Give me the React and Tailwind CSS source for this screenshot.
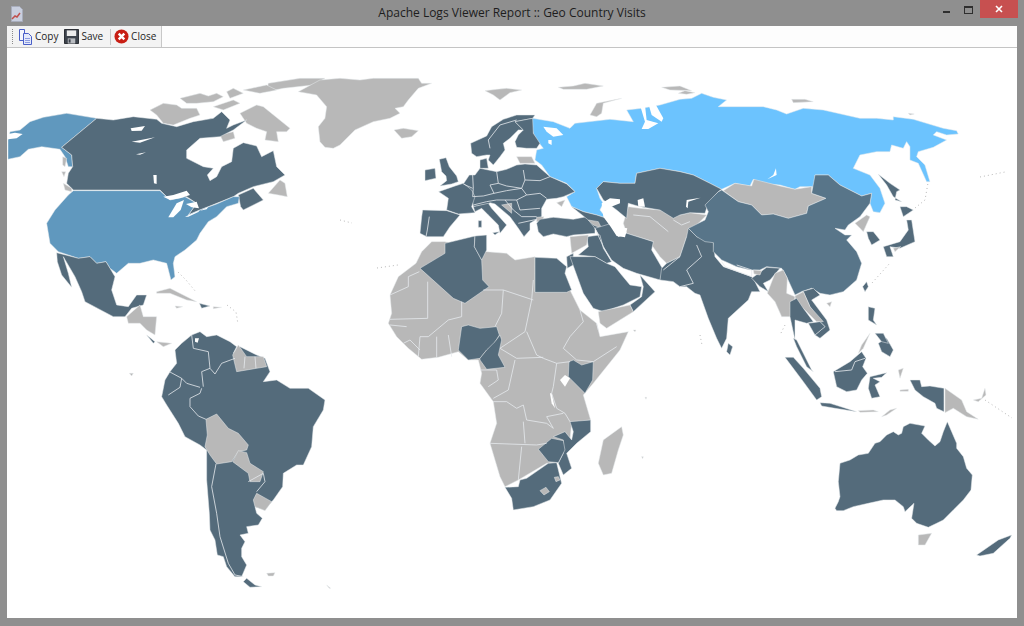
import React from 'react';

const DARK = '#546b7b';
const GRAY = '#b8b8b8';
const USA = '#6098be';
const RUSSIA = '#6cc3fe';
const CHINA = '#587589';
const WHITE = '#ffffff';

// every group is traced in its own 3x space, [originX, originY, shapes, lines]
const northAmerica = [0, 60, [
  [GRAY, '450,150 490,130 530,135 545,145 590,145 600,165 570,175 520,195 490,190 470,165'],
  [GRAY, '540,115 600,100 625,108 650,100 670,110 640,125 590,130 560,130'],
  [GRAY, '680,95 700,85 730,100 690,115'],
  [GRAY, '640,140 700,120 720,130 670,150'],
  [GRAY, '720,160 770,135 790,140 870,205 860,215 830,215 835,245 795,240 800,215 770,205 740,190'],
  [GRAY, '660,225 700,215 705,235 670,245'],
  [GRAY, '615,180 635,175 625,188'],
  [GRAY, '805,70 900,55 975,55 940,75 850,85 800,95'],
  [GRAY, '730,90 800,75 830,90 780,100'],
  [GRAY, '895,95 960,60 1020,55 1080,60 1120,55 1255,55 1265,70 1295,70 1255,85 1225,120 1210,140 1185,145 1200,160 1170,175 1120,185 1065,210 1020,255 1000,265 975,262 960,245 955,200 975,175 980,140 950,105'],
  [USA, '24,240 30,215 60,210 90,185 130,172 200,160 290,175 185,262 215,285 218,320 205,320 195,290 180,268 125,260 85,268 60,290 24,298'],
  [WHITE, '24,222 45,218 68,222 50,235 24,238'],
  [DARK, '290,175 340,180 400,170 470,178 485,190 530,200 580,185 640,175 665,155 690,180 680,205 700,195 740,180 700,210 660,230 600,235 560,270 560,295 610,320 640,325 622,345 630,362 650,350 665,320 695,305 700,265 730,248 770,258 785,290 820,272 830,320 855,345 820,365 760,380 715,400 700,410 650,430 600,450 565,465 590,430 560,410 510,420 480,390 220,390 200,370 205,340 218,320 215,285 185,262'],
  [DARK, '715,405 760,385 790,420 730,450 722,440'],
  [GRAY, '805,400 840,360 855,370 862,410 835,405'],
  [GRAY, '190,370 215,385 215,395 195,390'],
  [GRAY, '188,290 200,295 195,320 188,315'],
  [GRAY, '185,335 197,335 192,350'],
  [USA, '220,392 480,392 510,420 555,410 590,430 565,465 600,450 650,432 700,410 718,410 715,430 680,440 650,470 625,485 600,520 590,540 555,570 525,590 520,610 525,650 513,660 500,610 460,600 420,610 385,610 350,640 330,625 318,605 290,610 270,590 235,595 175,575 150,550 140,490 165,450 205,405'],
  [WHITE, '490,410 520,405 560,392 570,405 540,415 510,420'],
  [WHITE, '505,472 530,430 552,420 542,450 520,472'],
  [WHITE, '558,432 590,425 597,445 575,442'],
  [WHITE, '555,470 600,450 595,456 565,470'],
  [WHITE, '600,452 625,440 620,448'],
  [WHITE, '392,205 435,198 425,212 395,213'],
  [WHITE, '395,245 465,232 420,248'],
  [WHITE, '408,283 438,277 420,284'],
  [WHITE, '460,345 470,345 470,372 462,370'],
  [DARK, '170,578 235,595 270,590 290,610 318,605 330,625 345,650 335,690 350,735 385,740 410,705 440,705 430,735 395,745 375,770 340,770 255,725 245,695 225,650 190,590 205,640 215,682 185,645 172,605'],
  [GRAY, '380,770 420,735 430,770 470,770 465,825 440,810 420,790 385,790'],
  [GRAY, '470,695 510,685 560,710 590,725 560,720 510,700 470,700'],
  [GRAY, '525,738 548,740 530,745'],
  [DARK, '598,730 630,738 605,745'],
  [GRAY, '640,740 665,742 640,746'],
], []];

const southAmerica = [100, 300, [
  [DARK, '140,105 165,125 160,130'],
  [GRAY, '170,125 215,130 190,140'],
  [DARK, '275,105 300,95 320,110 350,105 390,125 410,140 400,160 420,140 470,165 495,175 510,215 490,245 530,240 570,265 625,265 675,300 670,330 640,380 635,440 610,495 590,495 550,520 548,560 520,600 515,605 495,630 465,620 470,640 487,655 475,675 440,680 445,700 420,705 435,725 425,745 425,770 440,795 425,830 405,830 380,800 370,770 352,765 345,720 330,690 328,640 320,540 320,450 300,435 255,410 235,370 200,315 185,290 195,240 210,215 230,190 225,150 245,130'],
  [DARK, '430,845 440,835 465,855 485,860 450,862'],
  [GRAY, '318,358 350,342 385,385 415,400 445,435 440,450 415,455 395,485 350,492 330,465 315,440 322,405'],
  [GRAY, '398,485 415,452 440,458 450,490 490,515 480,545 450,545 445,520'],
  [GRAY, '470,580 515,605 495,632 465,620 460,600'],
  [GRAY, '398,165 415,135 440,170 490,170 500,200 470,205 410,215'],
  [WHITE, '285,115 297,115 293,128 285,125'],
  [GRAY, '500,820 525,818 520,828 505,828'],
  [GRAY, '680,855 692,865 688,865'],
  [GRAY, '88,220 100,220 95,228'],
], [
  '275,105 280,145 325,155 330,205 305,215 310,260',
  '330,205 345,222 365,190 405,175',
  '208,215 245,235 260,250 300,262',
  '245,235 240,262 205,285',
  '305,265 300,280 270,295 270,320 295,348 318,358',
  '348,492 335,560 350,640 360,710 385,790 405,825 430,830',
  '445,545 490,520 495,545 470,575',
  '435,170 432,205',
  '465,170 468,205',
]];

const africa = [380, 280, [
  [GRAY, '108,-50 125,-85 155,-115 195,-115 320,-85 380,-80 405,-60 465,-70 465,35 570,30 600,90 650,130 660,170 745,155 720,210 640,310 610,345 632,420 575,430 570,480 535,545 500,550 415,600 375,620 360,590 330,490 350,430 340,365 300,310 305,280 295,240 265,240 235,215 175,232 125,238 85,205 50,170 25,130 35,100 30,45 55,-10'],
  [DARK, '120,-35 170,-65 195,-80 195,-110 285,-132 283,-100 305,-60 308,0 327,20 255,70 220,55'],
  [DARK, '285,-132 320,-135 320,-90 305,-60 283,-100'],
  [DARK, '465,-68 530,-65 560,-40 555,-20 575,30 560,37 465,37'],
  [DARK, '235,210 245,140 265,135 300,145 350,140 358,165 340,195 320,210 300,235 265,240 240,215'],
  [DARK, '300,235 320,210 345,185 360,165 365,180 355,225 375,262 320,268 300,240'],
  [DARK, '567,245 580,240 605,255 640,245 638,300 615,340 565,290'],
  [WHITE, '540,300 555,285 570,295 555,320'],
  [WHITE, '510,340 515,340 525,385 515,370'],
  [DARK, '570,425 632,420 632,455 590,490 560,520 570,550 575,565 550,585 535,550 550,520 550,480 520,470 555,455 575,480 580,455'],
  [DARK, '475,508 515,475 550,482 555,510 535,548 505,545'],
  [DARK, '375,622 415,620 420,600 440,595 505,550 530,548 540,590 545,610 510,660 460,680 400,690 395,655'],
  [GRAY, '480,632 498,622 508,635 492,645'],
  [GRAY, '523,592 535,590 540,600 528,605'],
  [GRAY, '655,550 670,480 725,440 730,465 715,510 695,580 670,585'],
  [GRAY, '760,150 768,150 765,155'],
  [GRAY, '795,352 800,352 798,358'],
  [GRAY, '785,530 790,530 788,536'],
], [
  '118,-25 85,-10 85,20 30,45',
  '143,5 143,115 30,118',
  '245,65 245,110 205,120',
  '205,120 145,170 120,170',
  '370,30 365,100 345,140',
  '460,0 455,60 435,155 360,205',
  '440,155 470,225 490,235',
  '360,205 410,235 490,232',
  '600,90 610,125 570,170 550,205 590,240 640,245 710,200',
  '655,150 650,130',
  '490,235 530,250 570,245',
  '405,240 385,330 340,355',
  '530,250 520,320 515,340 530,385 555,400 570,425',
  '340,365 380,365 410,385 430,375 440,420 500,430 520,445 500,410 550,400',
  '330,490 470,495 500,490',
  '430,425 435,490',
  '425,500 415,600',
  '120,170 115,230',
  '170,170 170,232',
  '205,165 215,230',
  '70,190 90,180 120,210',
  '30,135 80,140',
  '300,270 350,270 355,300 325,320',
  '310,30 370,30 460,60',
]];

const europe = [340, 60, [
  [GRAY, '162,210 190,205 235,212 215,230 185,235'],
  [GRAY, '435,92 470,88 500,85 545,90 510,98 480,120 460,105'],
  [GRAY, '655,82 700,78 735,70 790,78 740,88 670,88'],
  [GRAY, '965,82 1020,78 1055,92 990,90'],
  [GRAY, '750,165 770,130 845,115 790,130 785,160 770,170'],
  [GRAY, '1015,100 1035,92 1065,98 1040,103'],
  [GRAY, '1355,118 1395,118 1420,125 1360,128'],
  [GRAY, '1705,160 1723,162 1710,165'],
  [RUSSIA, '578,175 640,185 690,205 705,190 810,178 880,185 860,150 905,145 960,135 1020,118 1055,115 1085,100 1120,112 1160,120 1135,140 1180,140 1270,140 1310,150 1340,162 1390,145 1450,150 1560,175 1610,175 1660,180 1660,170 1720,178 1810,205 1850,212 1855,222 1820,225 1790,215 1780,225 1820,240 1780,262 1735,275 1730,290 1755,315 1770,365 1760,365 1735,310 1710,300 1710,260 1700,245 1690,265 1655,255 1650,275 1610,275 1560,285 1540,325 1590,345 1620,385 1635,430 1620,458 1600,455 1590,430 1595,400 1565,408 1500,375 1465,345 1425,345 1425,380 1380,380 1365,388 1320,375 1260,370 1240,358 1230,378 1185,370 1145,388 1110,370 1060,345 1020,335 960,325 890,340 885,370 840,370 790,365 770,385 780,415 790,430 780,450 800,475 770,465 730,455 695,440 680,410 705,395 680,370 630,350 605,315 585,300 590,270 610,265 590,240 580,220 572,180'],
  [WHITE, '610,200 650,205 670,225 640,230 620,215'],
  [WHITE, '625,240 635,240 635,255 625,250'],
  [WHITE, '900,135 915,135 920,180 955,190 925,207 905,207 915,185'],
  [WHITE, '925,130 945,130 970,175 965,185 935,165'],
  [WHITE, '1308,325 1310,345 1282,358 1300,345'],
  [DARK, '392,250 440,228 455,200 490,178 530,165 585,165 578,175 525,185 550,210 535,210 510,235 490,250 495,270 480,290 460,315 445,300 450,285 440,285 410,290 395,280'],
  [DARK, '525,185 578,175 580,220 600,250 590,265 560,265 530,262 525,245 535,225 550,210'],
  [DARK, '420,300 440,295 445,325 420,325'],
  [DARK, '298,298 318,293 328,320 350,348 355,365 335,372 300,378 320,362 318,348 305,335'],
  [DARK, '255,330 285,325 288,355 255,362'],
  [DARK, '370,372 388,345 405,345 420,325 445,330 470,335 500,328 530,315 555,312 590,315 630,350 680,372 705,395 670,410 650,415 620,418 605,445 605,470 590,478 570,490 570,510 552,530 535,505 510,470 465,432 450,428 445,432 400,440 395,405'],
  [DARK, '296,395 345,378 370,370 395,390 405,410 395,440 405,458 355,462 320,450 325,415'],
  [DARK, '248,450 320,452 360,465 330,500 310,530 260,530 240,520 245,470'],
  [DARK, '400,440 445,430 455,445 500,495 480,520 475,495 445,465 425,445 405,455'],
  [DARK, '415,482 425,482 425,502 415,502'],
  [DARK, '458,518 478,515 465,525'],
  [GRAY, '530,290 575,290 585,310 540,310'],
  [GRAY, '485,435 515,430 515,460'],
  [GRAY, '650,428 675,420 665,440'],
  [GRAY, '590,472 612,470 605,485 590,485'],
  [DARK, '590,490 600,478 640,472 700,478 740,470 765,500 765,520 700,525 680,530 640,522 610,530 595,515'],
  [DARK, '695,440 730,455 770,465 800,475 815,495 830,530 765,505 745,480'],
  [GRAY, '745,480 775,485 785,505 760,495'],
  [GRAY, '865,440 900,445 960,450 1020,465 1050,458 1100,465 1065,500 1068,525 1040,530 1020,590 980,610 960,590 935,555 940,545 860,520 850,490'],
  [DARK, '770,385 790,365 840,370 885,370 890,340 960,325 1020,335 1060,345 1110,370 1145,388 1135,395 1105,430 1095,460 1050,458 1020,465 1000,475 960,450 900,440 865,430 860,475 830,450 790,420'],
  [WHITE, '893,420 910,415 915,440 895,440'],
  [DARK, '765,505 815,490 835,530 860,520 940,545 935,570 970,630 960,660 890,640 850,625 815,600 790,560 780,530'],
  [DARK, '960,660 1000,665 1020,680 1040,680 1065,700 1080,705 1105,775 1130,835 1145,865 1160,835 1165,775 1225,720 1235,695 1260,695 1245,665 1235,650 1150,620 1125,590 1120,545 1070,530 1045,505 1040,530 1020,590 980,610 965,625'],
  [DARK, '1165,850 1178,860 1170,885 1160,875'],
  [WHITE, '785,430 810,415 840,418 840,430 810,442 805,470 830,500 862,505 855,532 830,528 812,500 790,470'],
  [DARK, '740,530 780,525 790,565 815,605 800,610 765,590 715,585 745,560'],
  [GRAY, '690,530 745,525 740,555 695,580'],
  [DARK, '680,590 700,580 700,615 682,625'],
  [DARK, '690,590 765,590 800,610 825,620 845,645 870,675 905,680 900,710 850,735 790,755 760,745 730,700'],
  [DARK, '900,645 945,695 880,755 870,735 905,710 910,680'],
  [GRAY, '775,755 870,735 880,755 800,805 780,790'],
], [
  '398,345 400,385 398,410 430,408 462,400 450,375 475,370 470,335',
  '475,370 500,378 545,385 555,360 550,330',
  '555,360 600,362 630,350',
  '545,385 560,405 600,400 620,415',
  '462,400 500,392 545,385',
  '400,435 440,425 470,420 530,420 560,405',
  '495,420 520,450 545,470 590,470',
  '530,420 540,450 600,445',
  '535,490 590,478',
  '370,372 398,385',
  '268,470 262,510 258,530',
  '880,465 930,470 985,515',
  '1000,480 1025,495 1050,485',
  '450,265 445,240 480,195 530,180',
  '970,630 1020,590',
  '1070,555 1085,590 1040,630 1060,670 1020,680',
  '765,505 790,560 815,605',
]];

const asia = [680, 60, [
  [GRAY, '130,392 165,370 215,378 222,358 300,378 345,388 395,380 395,400 438,415 385,438 380,460 325,475 280,462 245,465 215,435 175,425'],
  [CHINA, '125,390 175,425 215,435 245,465 280,462 325,475 380,460 385,438 438,415 395,400 405,345 445,345 480,375 545,408 575,400 570,430 540,470 505,495 495,510 465,505 495,525 515,525 500,540 530,575 545,610 530,660 490,695 450,705 420,700 395,685 365,695 345,705 320,650 305,625 260,620 240,630 210,630 170,620 125,600 100,575 100,548 75,545 50,530 25,505 75,480 85,455 75,435 115,395'],
  [WHITE, '18,440 20,420 62,413 25,425 23,445'],
  [DARK, '215,655 260,622 300,625 270,660 250,670 265,695 240,680'],
  [GRAY, '220,630 245,632 240,645 222,642'],
  [GRAY, '262,700 285,640 310,630 322,655 320,700 345,710 335,770 305,770 285,725'],
  [DARK, '365,695 400,685 420,705 395,720 440,780 450,810 420,835 405,825 435,800 420,785 390,740 370,695'],
  [GRAY, '345,708 370,695 390,740 430,785 410,785 370,745 350,740'],
  [DARK, '330,725 350,715 370,745 400,785 380,790 345,780 345,840 330,770'],
  [DARK, '385,790 420,785 435,800 405,825'],
  [GRAY, '440,730 455,725 450,740'],
  [DARK, '548,680 560,665 565,680 555,695'],
  [GRAY, '525,490 560,465 570,470 550,515 540,505'],
  [DARK, '560,515 580,515 600,540 575,555 565,535'],
  [DARK, '595,343 630,370 660,390 650,395 645,420 665,425 640,410 620,375'],
  [DARK, '660,440 680,440 700,450 670,470'],
  [DARK, '680,480 695,480 705,545 660,565 630,560 640,590 620,590 610,560 660,545 685,510'],
  [GRAY, '640,565 662,560 645,575'],
], [
  '125,605 135,620 215,650 215,630 170,615',
]];

const oceania = [740, 300, [
  [DARK, '160,115 170,120 190,160 215,210 220,215 200,200 170,140'],
  [DARK, '135,172 160,172 190,205 240,265 245,290 230,300 190,245'],
  [DARK, '240,308 270,310 350,335 285,325 245,318'],
  [GRAY, '355,332 400,330 415,335 360,337'],
  [GRAY, '425,350 450,330 470,325 440,345'],
  [DARK, '280,215 330,185 365,155 378,175 368,200 382,220 365,240 350,270 320,275 290,260'],
  [DARK, '390,230 440,218 425,232 400,235 420,245 405,255 420,290 395,295 385,265'],
  [DARK, '385,20 405,25 400,60 410,75 385,60'],
  [DARK, '415,130 440,115 460,150 450,170 425,155'],
  [DARK, '405,100 430,100 445,130 425,125'],
  [GRAY, '365,135 390,100 370,145 355,160'],
  [DARK, '510,240 540,240 545,260 570,258 612,265 612,335 590,325 585,310 550,290 525,270'],
  [GRAY, '615,265 665,300 680,335 715,358 680,350 640,325 615,338'],
  [GRAY, '700,300 725,295 735,265 738,285 715,305'],
  [GRAY, '480,270 505,268 505,274 480,274'],
  [GRAY, '475,210 490,205 480,235'],
  [DARK, '285,625 295,605 300,590 295,545 300,490 330,480 355,465 385,460 405,430 420,425 440,405 460,395 475,405 485,400 490,380 510,370 555,378 545,400 565,420 585,438 600,425 610,395 622,365 635,395 650,430 650,445 670,470 680,505 697,525 693,570 670,600 640,630 610,660 590,670 565,682 530,670 515,655 522,610 495,635 490,620 465,600 430,600 385,610 340,620 310,632 290,632'],
  [GRAY, '535,705 575,700 555,735 535,735'],
  [DARK, '710,765 775,720 815,705 810,715 760,760 720,768'],
], [
  '285,215 335,210 345,185 375,175',
]];

const groups = [northAmerica, southAmerica, africa, europe, asia, oceania];

// small island chains, in page pixels
const chains = [
  '227,305 236,312 238,324',
  '178,272 186,280 196,292',
  '377,268 398,265',
  '340,220 352,223',
  '915,208 925,200 928,183',
  '872,283 890,263',
  '980,177 1005,172',
  '985,400 1012,418',
  '700,335 702,345',
  '785,325 780,335',
];

function WorldMap() {
  return (
    <svg viewBox="7 48 1010 570" className="block h-full w-full">
      {chains.map((points, i) => (
        <polyline key={i} points={points} fill="none" stroke={GRAY} strokeWidth="1" strokeDasharray="1 3" />
      ))}
      {groups.map(([x, y, shapes, lines], i) => (
        <g key={i} transform={`translate(${x} ${y}) scale(0.3333)`}>
          {shapes.map(([fill, points], j) => (
            <polygon
              key={j}
              points={points}
              fill={fill}
              stroke={fill === WHITE ? 'none' : '#e6eaed'}
              strokeWidth="0.5"
              strokeLinejoin="round"
              vectorEffect="non-scaling-stroke"
            />
          ))}
          {lines.map((points, j) => (
            <polyline
              key={j}
              points={points}
              fill="none"
              stroke="#e6eaed"
              strokeWidth="0.8"
              vectorEffect="non-scaling-stroke"
            />
          ))}
        </g>
      ))}
    </svg>
  );
}

function AppIcon() {
  return (
    <svg width="16" height="16" viewBox="0 0 16 16">
      <path d="M2.5 .5h8l3 3v12h-11z" fill="#c9cfdf" stroke="#a8adbc" />
      <path d="M3 13l3-3 2 1 3-4" fill="none" stroke="#c0504d" strokeWidth="1.5" />
    </svg>
  );
}

function CopyIcon() {
  return (
    <svg width="15" height="16" viewBox="0 0 15 16">
      <path d="M1.5 .5h5v11h-5z" fill="#f4f6fd" stroke="#4a5fc8" />
      <path d="M5.5 4.5h5l3 3v8h-8z" fill="#e4e9fa" stroke="#4a5fc8" />
      <path d="M7 9.5h5M7 11.5h5M7 13.5h5" stroke="#8d9ce0" />
    </svg>
  );
}

function SaveIcon() {
  return (
    <svg width="15" height="15" viewBox="0 0 16 16">
      <path d="M.5 .5h15v15H.5z" fill="#3d434c" stroke="#23272d" />
      <path d="M3 1.5h10v6H3z" fill="#ececec" />
      <path d="M4 10h8v5.5H4z" fill="#b9bcc1" />
      <path d="M5 11h2v3.5H5z" fill="#3d434c" />
    </svg>
  );
}

function CloseIcon() {
  return (
    <svg width="15" height="15" viewBox="0 0 16 16">
      <circle cx="8" cy="8" r="7.5" fill="#c81e14" />
      <path d="M5 5l6 6M11 5l-6 6" stroke="#ffffff" strokeWidth="2.6" />
    </svg>
  );
}

const ToolButton = ({ icon, label }) => (
  <div className="flex items-center gap-[2px] text-[10px] text-[#1e1e1e]">
    {icon}
    <span>{label}</span>
  </div>
);

export default function App() {
  return (
    <div className="flex h-[626px] w-[1024px] flex-col overflow-hidden bg-[#8f8f8f] font-['Open_Sans',sans-serif]">
      <div className="grid h-[26px] shrink-0 grid-cols-[1fr_auto_1fr]">
        <div className="flex items-center pl-[9px] pt-px">
          <AppIcon />
        </div>
        <div className="pt-[5px] text-center text-[12px] leading-4 text-[#1d1d1d]">
          Apache Logs Viewer Report :: Geo Country Visits
        </div>
        <div className="flex items-start justify-end pr-[6px]">
          <div className="mr-[14px] mt-[11px] h-[2px] w-[7px] bg-[#2e2e2e]" />
          <div className="mr-[7px] mt-[6px] h-[8px] w-[9px] border border-t-2 border-[#2e2e2e]" />
          <div className="flex h-[18px] w-[38px] items-center justify-center bg-[#c75050]">
            <svg width="8" height="8" viewBox="0 0 8 8">
              <path d="M1 1l6 6M7 1L1 7" stroke="#ffffff" strokeWidth="1.6" />
            </svg>
          </div>
        </div>
      </div>
      <div className="flex min-h-0 flex-1 flex-col px-[7px] pb-[8px]">
        <div className="flex h-[22px] shrink-0 border-b border-[#c4c4c4] bg-[#fdfdfd]">
          <div className="flex items-center bg-[#f3f3f3] pl-[5px] pr-[5px] [border-right:1px_solid_#c8c8c8]">
            <div className="mr-[5px] h-[15px] w-px border-l border-dotted border-[#8a8a8a]" />
            <ToolButton icon={<CopyIcon />} label="Copy" />
            <div className="w-[6px]" />
            <ToolButton icon={<SaveIcon />} label="Save" />
            <div className="mx-[3px] ml-[7px] h-[16px] w-px bg-[#c8c8c8]" />
            <ToolButton icon={<CloseIcon />} label="Close" />
          </div>
        </div>
        <div className="min-h-0 flex-1 bg-white">
          <WorldMap />
        </div>
      </div>
    </div>
  );
}
